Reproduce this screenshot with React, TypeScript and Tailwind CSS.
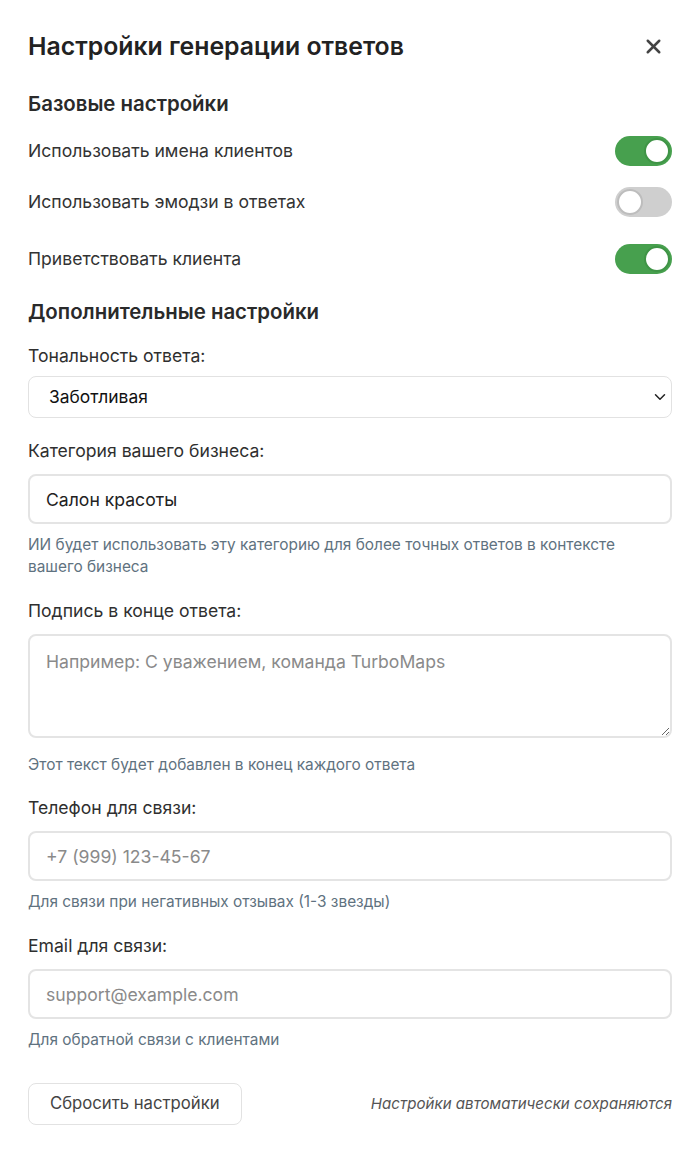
import { useState } from "react";
import { X, ChevronDown } from "lucide-react";

interface ToggleProps {
  on: boolean;
  onChange: () => void;
}

function Toggle({ on, onChange }: ToggleProps) {
  return (
    <button
      onClick={onChange}
      className={`flex h-[30px] w-[57px] shrink-0 items-center rounded-full p-[2px] transition-colors ${
        on ? "justify-end bg-[#47a04e]" : "justify-start bg-[#cfcfcf]"
      }`}
    >
      <span
        className={`h-[26px] w-[26px] rounded-full border-2 bg-white ${
          on ? "border-[#3f9446]" : "border-[#bdbdbd]"
        }`}
      />
    </button>
  );
}

interface FieldProps {
  label: string;
  hint?: string;
  hintGap?: string;
  children: React.ReactNode;
  className?: string;
}

function Field({ label, hint, hintGap = "mt-[10px]", children, className = "" }: FieldProps) {
  return (
    <div className={className}>
      <div className="text-[17.6px] leading-6 text-[#2f2f2f]">{label}</div>
      {children}
      {hint && <p className={`${hintGap} text-[15.4px] leading-[22px] text-[#5f7280]`}>{hint}</p>}
    </div>
  );
}

export default function App() {
  const [useNames, setUseNames] = useState(true);
  const [useEmoji, setUseEmoji] = useState(false);
  const [greet, setGreet] = useState(true);
  const [tone, setTone] = useState("Заботливая");
  const [category, setCategory] = useState("Салон красоты");

  const inputCls =
    "mt-[11px] block h-[50px] w-full rounded-lg border-2 border-[#e4e4e4] bg-white px-4 text-[17.6px] text-[#222] outline-none placeholder:text-[#8a8a8a]";

  return (
    <div
      className="min-h-[1150px] w-[700px] bg-white px-7 pt-[30px] pb-6"
      style={{ fontFamily: "Inter, 'Noto Sans', sans-serif" }}
    >
      {/* Header */}
      <div className="flex items-center justify-between">
        <h1 className="text-[24.8px] leading-8 font-semibold text-[#222]">Настройки генерации ответов</h1>
        <button className="mr-[7px] text-[#444]">
          <X size={23} strokeWidth={2.6} />
        </button>
      </div>

      {/* Basic */}
      <h2 className="mt-[28px] text-[20.4px] leading-7 font-semibold text-[#2a2a2a]">Базовые настройки</h2>

      <div className="mt-[18px] flex items-center justify-between">
        <span className="text-[17.6px] text-[#333]">Использовать имена клиентов</span>
        <Toggle on={useNames} onChange={() => setUseNames(!useNames)} />
      </div>
      <div className="mt-[21px] flex items-center justify-between">
        <span className="text-[17.6px] text-[#333]">Использовать эмодзи в ответах</span>
        <Toggle on={useEmoji} onChange={() => setUseEmoji(!useEmoji)} />
      </div>
      <div className="mt-[27px] flex items-center justify-between">
        <span className="text-[17.6px] text-[#333]">Приветствовать клиента</span>
        <Toggle on={greet} onChange={() => setGreet(!greet)} />
      </div>

      {/* Advanced */}
      <h2 className="mt-[24px] text-[20.4px] leading-7 font-semibold text-[#2a2a2a]">Дополнительные настройки</h2>

      <Field label="Тональность ответа:" className="mt-[18px]">
        <div className="relative mt-2">
          <select
            value={tone}
            onChange={(e) => setTone(e.target.value)}
            className="block h-[42px] w-full appearance-none rounded-lg border border-[#e2e2e2] bg-white pl-5 text-[17.4px] text-[#111] outline-none"
          >
            <option>Заботливая</option>
            <option>Дружелюбная</option>
            <option>Официальная</option>
          </select>
          <ChevronDown
            size={18}
            strokeWidth={2}
            className="pointer-events-none absolute top-1/2 right-[3px] -translate-y-1/2 text-[#222]"
          />
        </div>
      </Field>

      <Field
        label="Категория вашего бизнеса:"
        hint="ИИ будет использовать эту категорию для более точных ответов в контексте вашего бизнеса"
        className="mt-[21px]"
      >
        <input value={category} onChange={(e) => setCategory(e.target.value)} className={inputCls} />
      </Field>

      <Field
        label="Подпись в конце ответа:"
        hint="Этот текст будет добавлен в конец каждого ответа"
        hintGap="mt-[16px]"
        className="mt-[21px]"
      >
        <textarea
          placeholder="Например: С уважением, команда TurboMaps"
          className="mt-[11px] block h-[104px] w-full rounded-lg border-2 border-[#e4e4e4] bg-white px-4 pt-[13px] text-[17.6px] text-[#222] outline-none placeholder:text-[#8a8a8a]"
        />
      </Field>

      <Field label="Телефон для связи:" hint="Для связи при негативных отзывах (1-3 звезды)" className="mt-[20px]">
        <input placeholder="+7 (999) 123-45-67" className={inputCls} />
      </Field>

      <Field label="Email для связи:" hint="Для обратной связи с клиентами" className="mt-[21px]">
        <input placeholder="support@example.com" className={inputCls} />
      </Field>

      {/* Footer */}
      <div className="mt-[32px] flex items-center justify-between">
        <button className="h-[42px] rounded-lg border border-[#e2e2e2] bg-white px-[21px] text-[16.7px] text-[#444]">
          Сбросить настройки
        </button>
        <span className="text-[15.1px] text-[#555] italic">Настройки автоматически сохраняются</span>
      </div>
    </div>
  );
}
